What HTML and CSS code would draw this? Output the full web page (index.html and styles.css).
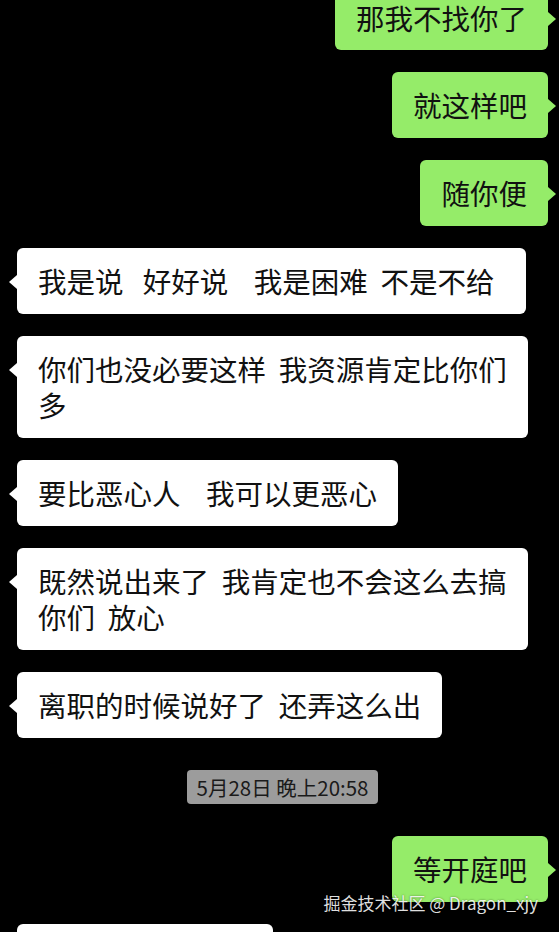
FILE: index.html
```html
<!doctype html>
<html lang="zh-CN">
  <head>
    <meta charset="utf-8">
    <title>聊天记录</title>
    <link rel="stylesheet" href="styles.css">
  </head>
  <body>
    <div class="chat">
      <div class="msg mine first">那我不找你了</div>
      <div class="msg mine">就这样吧</div>
      <div class="msg mine">随你便</div>
      <div class="msg theirs pad-end">我是说   好好说    我是困难  不是不给</div>
      <div class="msg theirs">你们也没必要这样  我资源肯定比你们多</div>
      <div class="msg theirs">要比恶心人    我可以更恶心</div>
      <div class="msg theirs">既然说出来了  我肯定也不会这么去搞你们  放心</div>
      <div class="msg theirs">离职的时候说好了  还弄这么出</div>
      <div class="time">5月28日 晚上20:58</div>
      <div class="msg mine">等开庭吧</div>
      <div class="msg theirs last"> </div>
    </div>
    <div class="watermark">掘金技术社区 @ Dragon_xjy</div>
  </body>
</html>
```

FILE: styles.css
```css
body {
  margin: 0;
  width: 559px;
  height: 932px;
  overflow: hidden;
  background: #000;
  font-family: "Noto Sans CJK SC", "Noto Sans", sans-serif;
  position: relative;
}

.chat {
  display: flex;
  flex-direction: column;
  gap: 22px;
  margin-top: -15px;
  padding: 0 11px 0 17px;
}

.msg {
  position: relative;
  max-width: 511px;
  box-sizing: border-box;
  padding: 15px 21px;
  border-radius: 6px;
  font-size: 28.5px;
  line-height: 36px;
  color: #111;
  white-space: pre-wrap;
}

/* first bubble is cut by the top edge */
.msg.first {
  padding-bottom: 14px;
}

.msg::before {
  content: "";
  position: absolute;
  top: 27px;
  border-top: 7px solid transparent;
  border-bottom: 7px solid transparent;
}

.mine {
  align-self: flex-end;
  background: #95ec69;
}

.mine::before {
  right: -8px;
  border-left: 8px solid #95ec69;
}

.theirs {
  align-self: flex-start;
  background: #fff;
}

.theirs::before {
  left: -8px;
  border-right: 8px solid #fff;
}

.pad-end {
  padding-right: 32px;
}

.last {
  width: 256px;
}

.time {
  align-self: center;
  margin: 10px 0;
  padding: 0 10px;
  height: 34px;
  line-height: 34px;
  border-radius: 4px;
  background: #9c9c9c;
  color: #1a1a1a;
  font-size: 20.5px;
}

.watermark {
  position: absolute;
  right: 21px;
  top: 890px;
  font-size: 17px;
  line-height: 26px;
  color: rgba(255, 255, 255, 0.88);
  text-shadow: 0 0 2px rgba(0, 0, 0, 0.5);
}
```
